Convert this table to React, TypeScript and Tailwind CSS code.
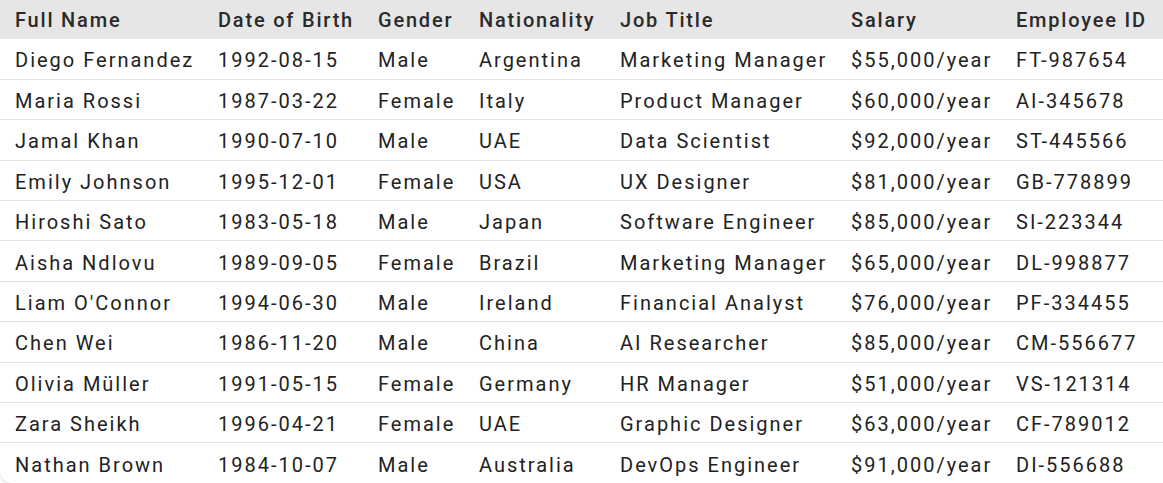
const rows = [
  ["Diego Fernandez", "1992-08-15", "Male", "Argentina", "Marketing Manager", "$55,000/year", "FT-987654"],
  ["Maria Rossi", "1987-03-22", "Female", "Italy", "Product Manager", "$60,000/year", "AI-345678"],
  ["Jamal Khan", "1990-07-10", "Male", "UAE", "Data Scientist", "$92,000/year", "ST-445566"],
  ["Emily Johnson", "1995-12-01", "Female", "USA", "UX Designer", "$81,000/year", "GB-778899"],
  ["Hiroshi Sato", "1983-05-18", "Male", "Japan", "Software Engineer", "$85,000/year", "SI-223344"],
  ["Aisha Ndlovu", "1989-09-05", "Female", "Brazil", "Marketing Manager", "$65,000/year", "DL-998877"],
  ["Liam O'Connor", "1994-06-30", "Male", "Ireland", "Financial Analyst", "$76,000/year", "PF-334455"],
  ["Chen Wei", "1986-11-20", "Male", "China", "AI Researcher", "$85,000/year", "CM-556677"],
  ["Olivia Müller", "1991-05-15", "Female", "Germany", "HR Manager", "$51,000/year", "VS-121314"],
  ["Zara Sheikh", "1996-04-21", "Female", "UAE", "Graphic Designer", "$63,000/year", "CF-789012"],
  ["Nathan Brown", "1984-10-07", "Male", "Australia", "DevOps Engineer", "$91,000/year", "DI-556688"],
];

const headers = ["Full Name", "Date of Birth", "Gender", "Nationality", "Job Title", "Salary", "Employee ID"];
const widths = ["w-[203px]", "w-[160px]", "w-[101px]", "w-[141px]", "w-[231px]", "w-[165px]", "w-[162px]"];

export default function App() {
  return (
    <div className="w-[1163px] h-[483px] overflow-hidden bg-white font-['Roboto',sans-serif]">
      <div className="w-[1178px] rounded-b-xl bg-white shadow-[0_1px_3px_rgba(0,0,0,0.15)] overflow-hidden">
        <table className="table-fixed border-collapse text-left">
          <thead>
            <tr className="h-[39px] bg-[#e6e6e6]">
              {headers.map((h, i) => (
                <th key={h} className={`${widths[i]} pl-[15px] text-[20px] font-medium tracking-[1.8px] text-[#2a2a2a] whitespace-nowrap`}>
                  {h}
                </th>
              ))}
            </tr>
          </thead>
          <tbody>
            {rows.map((r, ri) => (
              <tr key={ri} className={`h-[40.4px] ${ri > 0 ? "border-t border-[#e2e2e2]" : ""}`}>
                {r.map((c, ci) => (
                  <td key={ci} className="pl-[15px] pt-[3px] text-[20px] tracking-[2px] text-[#222] whitespace-nowrap">
                    {c}
                  </td>
                ))}
              </tr>
            ))}
          </tbody>
        </table>
      </div>
    </div>
  );
}
